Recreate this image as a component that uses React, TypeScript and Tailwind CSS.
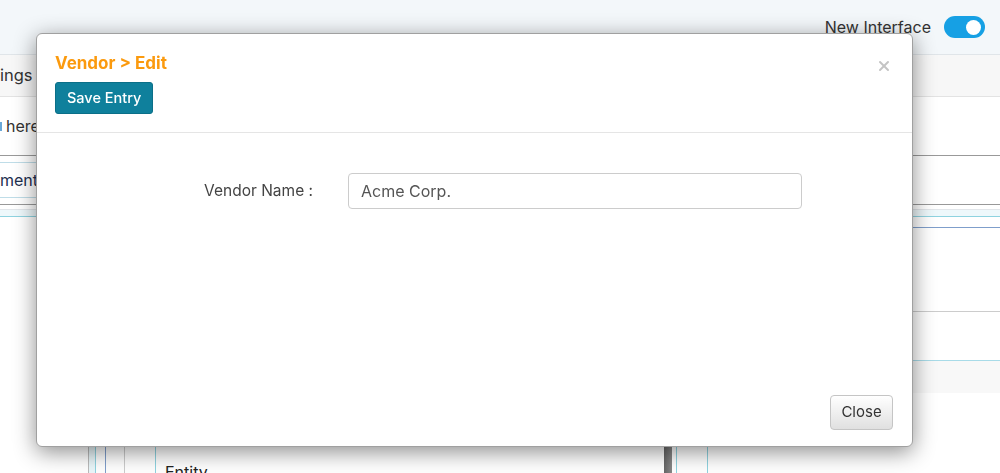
import { X } from 'lucide-react';

const font = { fontFamily: 'Inter, "Noto Sans", sans-serif' };

// the page sitting behind the dialog, mostly hidden
function BackgroundPage() {
  return (
    <div className="h-[473px] w-[1000px] overflow-hidden bg-white text-[#333]" style={font}>
      <div className="flex h-[55px] items-center justify-end border-b border-[#e0e5e9] bg-[#f3f7fa] pr-[15px]">
        <span className="text-[16px] text-[#333]">New Interface</span>
        <div className="ml-[13px] flex h-[22px] w-[41px] items-center justify-end rounded-full bg-[#16a0e4] pr-[4px]">
          <div className="h-[15px] w-[15px] rounded-full bg-white" />
        </div>
      </div>

      <div className="flex h-[42px] items-center border-b border-[#e3e3e3] bg-[#f7f7f7]">
        <div className="whitespace-nowrap text-[16.5px]">ings</div>
      </div>

      <div className="flex h-[59px] items-center border-b border-[#999] bg-white">
        <div className="flex items-center whitespace-nowrap text-[16px]">
          <span className="mr-[4px] h-[9px] w-[2px] bg-[#6aa8d8]" />
          here
        </div>
      </div>

      <div className="flex">
        <div className="w-[36px] shrink-0 pt-[6px]">
          <div className="flex h-[36px] items-center border-y border-[#bfdde8]">
            <div className="whitespace-nowrap text-[16px] text-[#1d2f4f]">ment</div>
          </div>
        </div>
        <div className="flex-1" />
      </div>
      <div className="mt-[6px] h-[5px] border-t border-[#999]" />
      <div className="h-[7px] border-t border-[#e2e6ea] bg-[#eef8fb]" />
      <div className="border-t border-[#8fd3e0]" />
      <div className="flex">
        <div className="w-[708px] shrink-0" />
        <div className="mt-[10px] flex-1 border-t border-[#7f9ecb]" />
      </div>

      <div className="flex h-[246px]">
        <div className="w-[88px] shrink-0" />
        <div className="flex w-[620px] border-l border-[#bbb]">
          <div className="w-[7px] border-r border-[#8fd3e0] bg-[#eaf7fa]" />
          <div className="w-[10px] border-r border-[#7f9ecb]" />
          <div className="w-[19px] border-r border-[#ccc]" />
          <div className="w-[31px] border-r border-[#8fd3e0]" />
          <div className="flex flex-1 flex-col justify-end pl-[9px]">
            <div className="translate-y-[10px] text-[16px] leading-[24px] text-[#222]">Entity</div>
          </div>
          <div className="w-[8px] bg-gradient-to-r from-[#666] to-[#888]" />
          <div className="w-[5px] border-r border-[#8fd3e0]" />
          <div className="w-[31px] border-r border-[#8fd3e0]" />
        </div>
        <div className="flex flex-1 flex-col">
          <div className="h-[83px]" />
          <div className="h-[49px] border-t border-[#ccc]" />
          <div className="h-[33px] border-t border-[#a8dbe8] bg-[#f8f8f8]" />
          <div className="flex-1 bg-white" />
        </div>
      </div>
    </div>
  );
}

function VendorDialog() {
  return (
    <div
      className="fixed left-[36px] top-[33px] flex h-[414px] w-[877px] flex-col rounded-[6px] border border-[#a0a0a0] bg-white shadow-[0_5px_22px_rgba(0,0,0,0.45)]"
      style={font}
    >
      <div className="relative border-b border-[#e5e5e5] px-[18px] pb-[18px] pt-[19px]">
        <h4 className="text-[17px] font-bold leading-[20px] text-[#fb9a0e]">Vendor &gt; Edit</h4>
        <button className="mt-[9px] h-[32px] rounded-[3px] border border-[#0b6f88] bg-[#0f809c] px-[11px] text-[14.5px] font-medium text-white">
          Save Entry
        </button>
        <X className="absolute right-[20px] top-[24px] h-[16px] w-[16px] text-[#c4c4c4]" strokeWidth={3} />
      </div>

      <div className="flex-1 px-[18px] pt-[40px]">
        <div className="flex items-center">
          <label className="w-[258px] text-right text-[15.5px] text-[#444]">Vendor Name :</label>
          <div className="ml-[35px] flex h-[36px] w-[454px] items-center rounded-[4px] border border-[#ccc] px-[12px] text-[16px] text-[#555]">
            Acme Corp.
          </div>
        </div>
      </div>

      <div className="flex justify-end pb-[16px] pr-[19px]">
        <button className="h-[35px] w-[63px] rounded-[4px] border border-[#c5c5c5] bg-gradient-to-b from-white to-[#e0e0e0] text-[15px] text-[#333]">
          Close
        </button>
      </div>
    </div>
  );
}

export default function App() {
  return (
    <div className="relative h-[473px] w-[1000px] overflow-hidden">
      <BackgroundPage />
      <VendorDialog />
    </div>
  );
}
